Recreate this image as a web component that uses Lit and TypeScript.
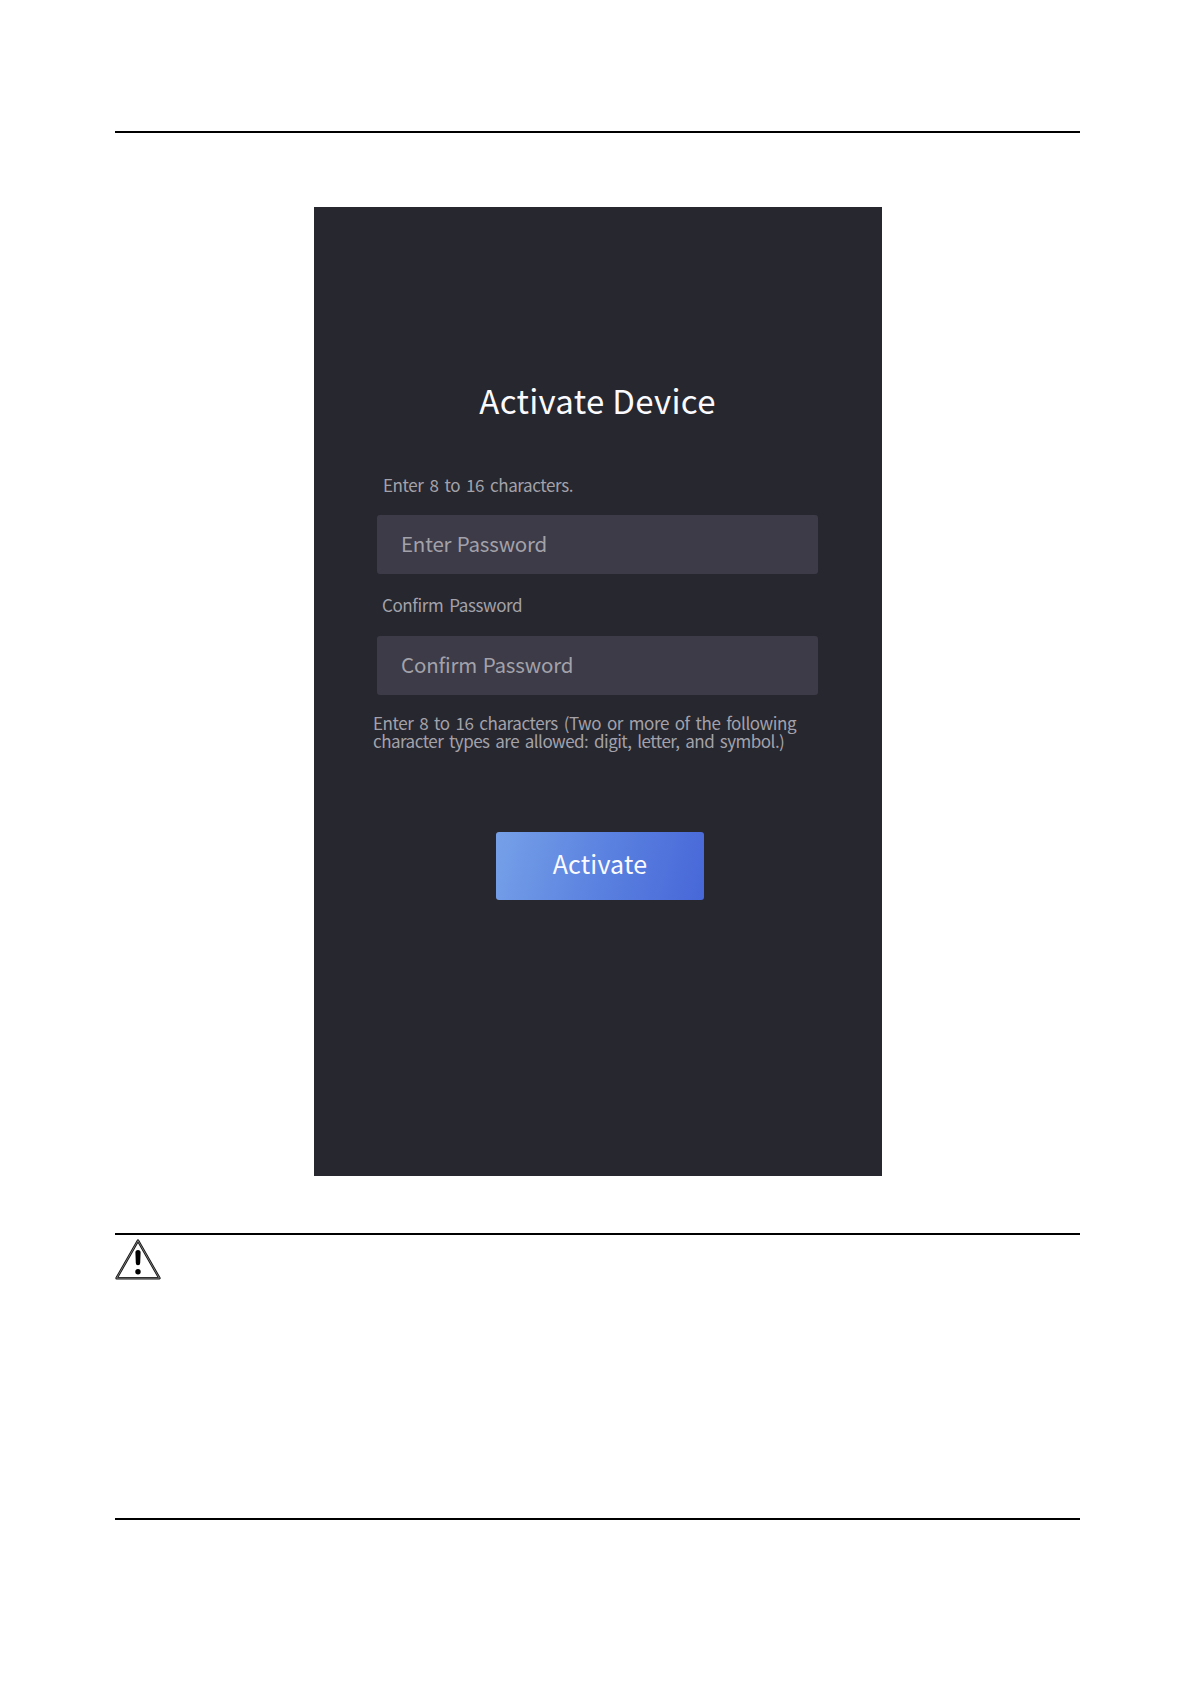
import { LitElement, html, css } from "lit";
import { customElement } from "lit/decorators.js";

@customElement("warning-icon")
export class WarningIcon extends LitElement {
    render() {
        return html`
            <svg viewBox="0 0 46 41" width="46" height="41">
                <path d="M23 1.6 L44.4 39.2 H1.6 Z" fill="#fff" stroke="#111" stroke-width="2.5" stroke-linejoin="round" />
                <path d="M23 1.6 L44.4 39.2 H1.6 Z" fill="none" stroke="#bbb" stroke-width="0.6" stroke-linejoin="round" />
                <path d="M20.4 13.6 a2.6 2.6 0 0 1 5.2 0 L25.2 24 a2.2 2.2 0 0 1 -4.4 0 Z" fill="#000" />
                <circle cx="23" cy="32.8" r="2.7" fill="#000" />
            </svg>
        `
    }

    static get styles() {
        return css`
            :host {
                display: block;
                width: 46px;
                height: 41px;
            }

            svg {
                display: block;
            }
        `
    }
}

@customElement("activate-device")
export class ActivateDevice extends LitElement {
    render() {
        return html`
            <h1 class="title">Activate Device</h1>
            <div class="label first">Enter 8 to 16 characters.</div>
            <div class="field enter">Enter Password</div>
            <div class="label second">Confirm Password</div>
            <div class="field confirm">Confirm Password</div>
            <p class="hint">
                Enter 8 to 16 characters (Two or more of the following<br />
                <span class="types">character types are allowed: digit, letter, and symbol.)</span>
            </p>
            <button class="activate">Activate</button>
        `
    }

    static get styles() {
        return css`
            :host {
                display: flex;
                flex-direction: column;
                box-sizing: border-box;
                width: 568px;
                height: 969px;
                padding: 169px 64px 0 63px;
                background: #27272f;
                color: #a3a2aa;
                font-family: "Noto Sans CJK SC", "Open Sans", sans-serif;
                font-variant-ligatures: none;
                white-space: nowrap;
            }

            .title {
                margin: 0;
                height: 48px;
                line-height: 48px;
                text-align: center;
                font-size: 33px;
                font-weight: 400;
                letter-spacing: 0.3px;
                color: #fafaff;
            }

            .label {
                height: 24px;
                line-height: 24px;
                padding-left: 6px;
                font-size: 17px;
                letter-spacing: -0.4px;
                word-spacing: 2.5px;
            }

            .first {
                margin-top: 49px;
            }

            .second {
                margin-top: 19px;
                padding-left: 5px;
            }

            .field {
                box-sizing: border-box;
                height: 59px;
                padding-left: 24px;
                line-height: 56px;
                border-radius: 3px;
                background: #3c3b47;
                font-size: 20.5px;
                word-spacing: 1px;
            }

            .enter {
                margin-top: 18px;
                letter-spacing: -0.2px;
            }

            .confirm {
                margin-top: 19px;
                letter-spacing: -0.15px;
            }

            .hint {
                margin: 19px 0 0 -4px;
                font-size: 17px;
                line-height: 18px;
                letter-spacing: -0.42px;
                word-spacing: 2.4px;
            }

            .types {
                letter-spacing: -0.52px;
            }

            .activate {
                width: 208px;
                height: 68px;
                margin: 82px 0 0 119px;
                padding: 0 0 7px;
                border: 0;
                border-radius: 3px;
                background: linear-gradient(105deg, #76a1e8, #5b82e0 50%, #4767d8);
                color: #fafaff;
                font-family: inherit;
                font-size: 25px;
                letter-spacing: 0.2px;
            }
        `
    }
}

@customElement("app-root")
export class AppRoot extends LitElement {
    render() {
        return html`
            <div class="rule"></div>
            <activate-device></activate-device>
            <div class="rule"></div>
            <warning-icon></warning-icon>
            <div class="rule bottom"></div>
        `
    }

    static get styles() {
        return css`
            :host {
                display: block;
                box-sizing: border-box;
                height: 1685px;
                padding: 131px 101px 0 115px;
                background: #fff;
            }

            .rule {
                height: 2px;
                background: #000;
            }

            activate-device {
                margin: 74px 0 57px 199px;
            }

            warning-icon {
                margin-top: 4px;
            }

            .bottom {
                margin-top: 238px;
            }
        `
    }
}
